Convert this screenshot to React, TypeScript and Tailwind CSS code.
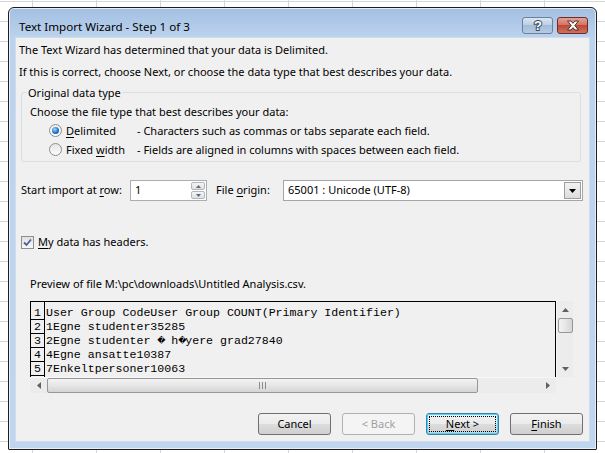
import React from "react";

const ui = "font-['Segoe_UI','Noto_Sans',sans-serif]";
const mono = "font-['Courier_New','Liberation_Mono',monospace]";

const R = "\uFFFD";
const ROWS = [
  "User Group CodeUser Group COUNT(Primary Identifier)",
  "1Egne studenter35285",
  `2Egne studenter ${R} h${R}yere grad27840`,
  "4Egne ansatte10387",
  "7Enkeltpersoner10063",
];

// Render the replacement glyph in a fixed one-character cell so the columns stay aligned.
function MonoLine({ text }: { text: string }) {
  const parts = text.split(R);
  return (
    <>
      {parts.map((p, i) => (
        <React.Fragment key={i}>
          {p}
          {i < parts.length - 1 && (
            <span className="inline-block w-[7px] text-center font-['DejaVu_Sans',sans-serif] text-[8px] leading-[13px] align-top">{R}</span>
          )}
        </React.Fragment>
      ))}
    </>
  );
}

function Tri({ dir }: { dir: "up" | "down" | "left" | "right" }) {
  const pts = {
    up: "0,4 3.5,0 7,4",
    down: "0,0 7,0 3.5,4",
    left: "4,0 4,7 0,3.5",
    right: "0,0 4,3.5 0,7",
  }[dir];
  const vertical = dir === "up" || dir === "down";
  return (
    <svg width={vertical ? 7 : 4} height={vertical ? 4 : 7}>
      <polygon points={pts} fill="currentColor" />
    </svg>
  );
}

function Btn({ children, disabled, isDefault }: { children: React.ReactNode; disabled?: boolean; isDefault?: boolean }) {
  return (
    <div
      className={`w-[73px] h-[22px] rounded-[3px] border flex items-center justify-center p-[2px] ${
        disabled
          ? "border-[#adb2b5] text-[#a0a0a0] bg-[#f4f4f4]"
          : isDefault
          ? "border-[#3c7fb1] text-black bg-[linear-gradient(to_bottom,#f2f2f2_0%,#ebebeb_50%,#dddddd_50%,#cfcfcf_100%)] shadow-[inset_0_0_0_1px_#48d7fb]"
          : "border-[#707070] text-black bg-[linear-gradient(to_bottom,#f2f2f2_0%,#ebebeb_50%,#dddddd_50%,#cfcfcf_100%)]"
      }`}
    >
      <div
        className={`w-full h-full flex items-center justify-center ${
          isDefault ? "border border-dotted border-black" : ""
        }`}
      >
        {children}
      </div>
    </div>
  );
}

export default function App() {
  return (
    <div
      className={`w-[605px] h-[453px] overflow-hidden bg-white bg-[linear-gradient(to_right,#d6d6d6_1px,transparent_1px),linear-gradient(to_bottom,#d6d6d6_1px,transparent_1px)] bg-[size:64px_20px] bg-[position:32px_1px] pt-[7px] pl-[8px] ${ui} text-[11px] text-black`}
    >
      {/* Dialog frame */}
      <div className="w-[589px] h-[443px] border border-[#1e1e1e] rounded-t-[6px] rounded-b-[1px] bg-[linear-gradient(to_bottom,#a3bfe2_0px,#bcd3ee_30px,#c0d6ee_100%)] flex flex-col shadow-[inset_0_0_0_1px_#e4eef9]">
        {/* Title bar */}
        <div className="h-[29px] flex items-center pl-[10px] pr-[8px]">
          <span className="text-[11.6px] mt-[8px] flex-1">Text Import Wizard - Step 1 of 3</span>
          <div className="flex gap-[4px] mt-[5px]">
            <div className="w-[31px] h-[17px] rounded-[3px] border border-[#6a7f9c] bg-[linear-gradient(to_bottom,#d9e6f3_0%,#b9cde5_50%,#a4bcda_50%,#b6cbe3_100%)] flex items-center justify-center">
              <svg width="12" height="14" viewBox="0 0 12 14">
                <text
                  x="6"
                  y="11.5"
                  textAnchor="middle"
                  fontSize="13"
                  fontWeight="bold"
                  fontFamily="Liberation Sans, sans-serif"
                  fill="white"
                  stroke="#3d4c60"
                  strokeWidth="2"
                  paintOrder="stroke"
                >
                  ?
                </text>
              </svg>
            </div>
            <div className="w-[31px] h-[17px] rounded-[3px] border border-[#6d2c25] bg-[linear-gradient(to_bottom,#e6a095_0%,#d0705f_50%,#c04a36_50%,#d0705c_100%)] flex items-center justify-center">
              <svg width="14" height="11" viewBox="0 0 14 11">
                <path
                  d="M1.5 1 L5 1 L7 3.3 L9 1 L12.5 1 L8.8 5.5 L12.5 10 L9 10 L7 7.7 L5 10 L1.5 10 L5.2 5.5 Z"
                  fill="white"
                  stroke="#46302c"
                  strokeWidth="1"
                  strokeLinejoin="round"
                />
              </svg>
            </div>
          </div>
        </div>

        {/* Client area */}
        <div className="mx-[6px] h-[405px] bg-[#f0f0f0] border border-[#cfdced] flex flex-col">
          <div className="pl-[3px] pt-[4px] leading-[15px]">
            <p>The Text Wizard has determined that your data is Delimited.</p>
            <p className="mt-[7px]">If this is correct, choose Next, or choose the data type that best describes your data.</p>
          </div>

          {/* Group box */}
          <div className="relative ml-[5px] mt-[13px] w-[560px] h-[70px] border border-[#d5dfe5] rounded-[3px]">
            <span className="absolute left-[5px] top-[-8px] px-[1px] bg-[#f0f0f0] leading-[15px]">Original data type</span>
            <div className="pl-[8px] pt-[11px] leading-[15px]">
              <p>Choose the file type that best describes your data:</p>
              <div className="flex items-center mt-[2px] h-[19px]">
                <div className="ml-[19px] w-[13px] h-[13px] rounded-full border border-[#8e8f8f] bg-[linear-gradient(to_bottom,#eeeeee,#fbfbfb)] flex items-center justify-center">
                  <div className="w-[7px] h-[7px] rounded-full bg-[radial-gradient(circle_at_40%_35%,#9cd9ff,#1a6bc4_60%,#0e4593)]" />
                </div>
                <span className="ml-[4px] w-[71px]">
                  <span className="underline underline-offset-2">D</span>elimited
                </span>
                <span>- Characters such as commas or tabs separate each field.</span>
              </div>
              <div className="flex items-center h-[19px]">
                <div className="ml-[19px] w-[13px] h-[13px] rounded-full border border-[#8e8f8f] bg-[linear-gradient(to_bottom,#e6e6e6,#fbfbfb)]" />
                <span className="ml-[4px] w-[71px]">
                  Fixed <span className="underline underline-offset-2">w</span>idth
                </span>
                <span>- Fields are aligned in columns with spaces between each field.</span>
              </div>
            </div>
          </div>

          {/* Start row / origin */}
          <div className="flex items-center ml-[5px] mt-[18px] h-[21px] whitespace-nowrap">
            <span className="w-[109px]">
              Start import at <span className="underline underline-offset-2">r</span>ow:
            </span>
            <div className="w-[77px] h-[21px] border border-[#abadb3] bg-white flex items-center">
              <span className="pl-[4px] flex-1">1</span>
              <div className="w-[16px] h-full flex flex-col p-[1px] gap-[1px]">
                <div className="flex-1 border border-[#b6b6b6] rounded-[2px] bg-[linear-gradient(to_bottom,#f6f6f6,#e0e0e0)] flex items-center justify-center text-[#4f6d92]">
                  <svg width="5" height="3"><polygon points="0,3 2.5,0 5,3" fill="currentColor" /></svg>
                </div>
                <div className="flex-1 border border-[#b6b6b6] rounded-[2px] bg-[linear-gradient(to_bottom,#f6f6f6,#e0e0e0)] flex items-center justify-center text-[#4f6d92]">
                  <svg width="5" height="3"><polygon points="0,0 5,0 2.5,3" fill="currentColor" /></svg>
                </div>
              </div>
            </div>
            <span className="ml-[9px] w-[67px]">
              File <span className="underline underline-offset-2">o</span>rigin:
            </span>
            <div className="w-[300px] h-[21px] border border-[#a5a5a5] bg-white flex items-center">
              <span className="pl-[4px] flex-1">65001 : Unicode (UTF-8)</span>
              <div className="w-[17px] h-[17px] mr-[1px] border border-[#9d9d9d] bg-[linear-gradient(to_bottom,#f3f3f3,#dcdcdc)] flex items-center justify-center">
                <svg width="7" height="4"><polygon points="0,0 7,0 3.5,4" fill="black" /></svg>
              </div>
            </div>
          </div>

          {/* Headers checkbox */}
          <div className="flex items-center ml-[5px] mt-[34px] h-[15px]">
            <div className="w-[13px] h-[13px] border border-[#8f8f8f] bg-[linear-gradient(to_bottom,#e0e0e0,#f8f8f8)] flex items-center justify-center">
              <svg width="9" height="9" viewBox="0 0 9 9">
                <path d="M1 4.5 L3.5 7 L8 1.5" stroke="#4a5f97" strokeWidth="1.8" fill="none" />
              </svg>
            </div>
            <span className="ml-[4px]">
              <span className="underline underline-offset-2">M</span>y data has headers.
            </span>
          </div>

          {/* Preview */}
          <p className="ml-[14px] mt-[26px] leading-[15px]">Preview of file M:\pc\downloads\Untitled Analysis.csv.</p>
          <div className="ml-[14px] mt-[10px] w-[543px] h-[92px] grid grid-cols-[526px_17px] grid-rows-[76px_16px]">
            <div className={`border-t border-l border-r border-black overflow-hidden flex ${mono} text-[11.6px] leading-[14px]`}>
              <div className="w-[14px] border-r border-black pt-[4px] flex flex-col">
                {[1, 2, 3, 4, 5, 6].map((n) => (
                  <div key={n} className="h-[14px] border-b border-black text-center shrink-0 leading-[13px]">
                    {n <= 5 ? n : ""}
                  </div>
                ))}
              </div>
              <div className="pt-[4px] pl-[1px] whitespace-pre">
                {ROWS.map((r, i) => (
                  <div key={i} className="h-[14px] leading-[13px]">
                    <MonoLine text={r} />
                  </div>
                ))}
              </div>
            </div>
            {/* vertical scrollbar */}
            <div className="bg-[#ececec] border-l border-[#f7f7f7] flex flex-col items-center">
              <div className="h-[17px] flex items-center justify-center text-[#606060]">
                <Tri dir="up" />
              </div>
              <div className="w-[15px] h-[15px] rounded-[2px] border border-[#979797] bg-[linear-gradient(to_right,#f3f3f3,#e6e6e6_50%,#d4d4d4)]" />
              <div className="flex-1" />
              <div className="h-[17px] flex items-center justify-center text-[#606060]">
                <Tri dir="down" />
              </div>
            </div>
            {/* horizontal scrollbar */}
            <div className="bg-[#ececec] border-t border-[#f7f7f7] flex items-center">
              <div className="w-[17px] flex items-center justify-center text-[#606060]">
                <Tri dir="left" />
              </div>
              <div className="w-[431px] h-[15px] rounded-[2px] border border-[#979797] bg-[linear-gradient(to_bottom,#f3f3f3,#e6e6e6_50%,#d4d4d4)] flex items-center justify-center gap-[2px]">
                <div className="w-[1px] h-[7px] bg-[#8a8a8a]" />
                <div className="w-[1px] h-[7px] bg-[#8a8a8a]" />
                <div className="w-[1px] h-[7px] bg-[#8a8a8a]" />
              </div>
              <div className="flex-1" />
              <div className="w-[17px] flex items-center justify-center text-[#606060]">
                <Tri dir="right" />
              </div>
            </div>
            <div className="bg-[#f0f0f0]" />
          </div>

          {/* Buttons */}
          <div className="flex justify-end gap-[11px] pr-[6px] mt-[20px]">
            <Btn>Cancel</Btn>
            <Btn disabled>&lt; Back</Btn>
            <Btn isDefault>
              <span>
                <span className="underline underline-offset-2">N</span>ext &gt;
              </span>
            </Btn>
            <Btn>
              <span>
                <span className="underline underline-offset-2">F</span>inish
              </span>
            </Btn>
          </div>
        </div>
      </div>
    </div>
  );
}
